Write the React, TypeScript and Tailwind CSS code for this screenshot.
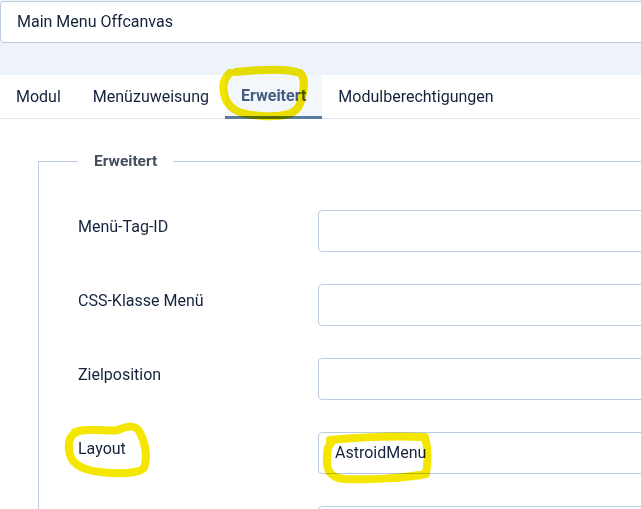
const fields = [
  { label: "Menü-Tag-ID", value: "" },
  { label: "CSS-Klasse Menü", value: "" },
  { label: "Zielposition", value: "" },
  { label: "Layout", value: "AstroidMenu" },
  { label: "", value: "" },
];

const tabs = ["Modul", "Menüzuweisung", "Erweitert", "Modulberechtigungen"];

const App = () => {
  return (
    <div className="relative w-[641px] h-[509px] overflow-hidden bg-white font-['Roboto',sans-serif] text-[#14233c]">
      {/* title input */}
      <div className="bg-[#eef3fa] pt-px pb-8">
        <div className="h-[42px] w-[660px] bg-white border border-[#bccbe0] rounded-[4px] flex items-center px-4 text-[16px]">
          Main Menu Offcanvas
        </div>
      </div>

      {/* tabs */}
      <div className="flex h-[44px] border-b border-[#dfe6ef] bg-white text-[16px]">
        {tabs.map((t) =>
          t === "Erweitert" ? (
            <div
              key={t}
              className="flex items-center px-4 bg-[#f3f6fa] border-b-[3px] border-[#5b7aa0] font-bold text-[#455d82] -mb-px"
            >
              {t}
            </div>
          ) : (
            <div key={t} className="flex items-center px-4">
              {t}
            </div>
          )
        )}
      </div>

      {/* fieldset */}
      <div className="pt-[35px] pl-[38px]">
        <fieldset className="border-l border-t border-[#bccbe0] pl-[39px] pt-[41px] w-[700px]">
          <legend className="px-4 font-bold text-[#454f5c] text-[15.5px] leading-none">
            Erweitert
          </legend>
          <div className="flex flex-col gap-[33px]">
            {fields.map((f, i) => (
              <div key={i} className="flex items-center h-[41px]">
                <div className="w-[240px] text-[16px] -mt-[9px]">{f.label}</div>
                <div className="h-[42px] w-[400px] border border-[#bccbe0] rounded-[4px] flex items-center px-4 text-[16px]">
                  {f.value}
                </div>
              </div>
            ))}
          </div>
        </fieldset>
      </div>

      {/* hand-drawn highlights */}
      <svg
        className="absolute inset-0 pointer-events-none mix-blend-multiply"
        width="641"
        height="509"
        fill="none"
        stroke="#f5e600"
        strokeWidth="8"
        strokeLinecap="round"
        strokeLinejoin="round"
      >
        <path d="M236 72 C 255 70, 285 68, 300 73 C 306 78, 304 92, 300 104 C 296 114, 285 117, 262 116 C 244 115, 232 112, 226 100 C 222 90, 222 80, 230 73" />
        <path d="M75 432 C 90 427, 110 432, 118 430 C 128 426, 136 424, 140 433 C 145 442, 148 456, 144 468 C 138 474, 118 474, 100 472 C 82 470, 70 464, 69 450 C 68 440, 70 434, 80 431" />
        <path d="M330 440 C 360 437, 400 436, 425 437 C 428 448, 428 462, 426 474 C 405 478, 370 480, 345 479 C 330 478, 326 470, 327 458 C 327 450, 328 444, 334 440" />
      </svg>
    </div>
  );
};

export default App;
